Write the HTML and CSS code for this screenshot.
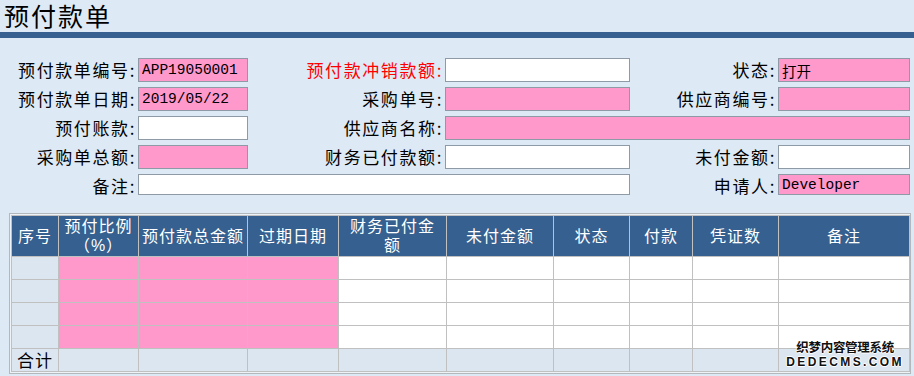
FILE: index.html
```html
<!DOCTYPE html>
<html lang="zh-CN">
<head>
    <meta charset="UTF-8">
    <title>预付款单</title>
    <link rel="stylesheet" href="styles.css">
</head>
<body>
    <header class="page-head">
        <h1>预付款单</h1>
    </header>

    <form class="bill-form">
        <label class="lbl">预付款单编号:</label>
        <input class="fld req" type="text" value="APP19050001">
        <label class="lbl red">预付款冲销款额:</label>
        <input class="fld" type="text">
        <label class="lbl">状态:</label>
        <input class="fld req" type="text" value="打开">

        <label class="lbl">预付款单日期:</label>
        <input class="fld req" type="text" value="2019/05/22">
        <label class="lbl">采购单号:</label>
        <input class="fld req" type="text">
        <label class="lbl">供应商编号:</label>
        <input class="fld req" type="text">

        <label class="lbl">预付账款:</label>
        <input class="fld" type="text">
        <label class="lbl">供应商名称:</label>
        <input class="fld req span-3" type="text">

        <label class="lbl">采购单总额:</label>
        <input class="fld req" type="text">
        <label class="lbl">财务已付款额:</label>
        <input class="fld" type="text">
        <label class="lbl">未付金额:</label>
        <input class="fld" type="text">

        <label class="lbl">备注:</label>
        <input class="fld short span-3" type="text">
        <label class="lbl">申请人:</label>
        <input class="fld req short" type="text" value="Developer">
    </form>

    <div class="grid-wrap">
        <table class="pay-grid">
            <colgroup>
                <col style="width:47px"><col style="width:80px"><col style="width:109px">
                <col style="width:91px"><col style="width:108px"><col style="width:107px">
                <col style="width:76px"><col style="width:63px"><col style="width:86px">
                <col style="width:131px">
            </colgroup>
            <thead>
                <tr>
                    <th>序号</th>
                    <th class="two">预付比例<br>（%）</th>
                    <th>预付款总金额</th>
                    <th>过期日期</th>
                    <th class="two">财务已付金<br>额</th>
                    <th>未付金额</th>
                    <th>状态</th>
                    <th>付款</th>
                    <th>凭证数</th>
                    <th>备注</th>
                </tr>
            </thead>
            <tbody id="grid-body"></tbody>
            <tfoot>
                <tr>
                    <td class="sum-label">合计</td>
                    <td></td><td></td><td></td><td></td><td></td><td></td><td></td><td></td><td></td>
                </tr>
            </tfoot>
        </table>
    </div>

    <div class="watermark">
        <div class="wm-cn">织梦内容管理系统</div>
        <div class="wm-en">DEDECMS.COM</div>
    </div>

    <script>
        const body = document.getElementById('grid-body');
        for (let i = 0; i < 4; i++) {
            const tr = document.createElement('tr');
            tr.innerHTML = '<td class="idx"></td>' +
                '<td class="req"></td><td class="req"></td><td class="req"></td>' +
                '<td></td><td></td><td></td><td></td><td></td><td></td>';
            body.appendChild(tr);
        }
    </script>
</body>
</html>
```

FILE: styles.css
```css
body {
    margin: 0;
    height: 376px;
    overflow: hidden;
    position: relative;
    background: #dde9f5;
    font-family: "Noto Sans CJK SC", sans-serif;
    color: #000;
}

.page-head {
    border-bottom: 6px solid #35608f;
    height: 32px;
}

.page-head h1 {
    margin: 0;
    padding: 2px 0 0 4px;
    font-family: "Liberation Sans", "Noto Sans CJK SC", sans-serif;
    font-size: 25px;
    font-weight: normal;
    line-height: 30px;
    letter-spacing: 2px;
}

.bill-form {
    display: grid;
    grid-template-columns: 138px 110px 197px 185px 148px 132px;
    grid-auto-rows: 24px;
    row-gap: 5px;
    margin-top: 20px;
}

.lbl {
    font-size: 17px;
    letter-spacing: 1.6px;
    line-height: 24px;
    text-align: right;
    padding-right: 2px;
    white-space: nowrap;
}

.lbl.red {
    color: #ff0000;
}

.fld {
    box-sizing: border-box;
    width: 100%;
    height: 24px;
    margin: 0;
    padding: 0 3px;
    border: 1px solid #8e9aa6;
    background: #fff;
    font-family: "Liberation Mono", "Noto Sans CJK SC", monospace;
    font-size: 14.5px;
    color: #000;
    outline: none;
}

.fld.req {
    background: #ff99cc;
}

.fld.short {
    height: 21px;
}

.span-3 {
    grid-column: span 3;
}

.grid-wrap {
    margin: 15px 0 0 9px;
    width: 898px;
    border: 1px solid #b3b8bd;
    padding: 1px;
    background: #eef3f8;
}

.pay-grid {
    width: 898px;
    table-layout: fixed;
    border-collapse: collapse;
}

.pay-grid th,
.pay-grid td {
    border: 1px solid #c0c0c0;
    padding: 0;
}

.pay-grid th {
    height: 39px;
    background: #35608f;
    color: #fff;
    font-family: "Liberation Sans", "Noto Sans CJK SC", sans-serif;
    font-size: 16px;
    font-weight: normal;
    letter-spacing: 1px;
    line-height: 19px;
    text-align: center;
    white-space: nowrap;
}

.pay-grid th.two {
    vertical-align: top;
    line-height: 19px;
    padding-top: 1px;
}

.pay-grid td {
    height: 22px;
    background: #fff;
}

.pay-grid td.idx {
    background: #dce6f0;
}

.pay-grid td.req {
    background: #ff99cc;
}

.pay-grid tfoot td {
    background: #dce6f0;
}

.pay-grid td.sum-label {
    font-size: 17px;
    letter-spacing: 1px;
    text-align: center;
    line-height: 20px;
}

.watermark {
    position: absolute;
    right: 10px;
    bottom: 7px;
    text-align: center;
    font-weight: bold;
    color: #111;
    text-shadow: -1px 0 #fff, 1px 0 #fff, 0 -1px #fff, 0 1px #fff;
}

.wm-cn {
    font-size: 12.5px;
    line-height: 16px;
    letter-spacing: -0.3px;
}

.wm-en {
    font-family: "Liberation Sans", sans-serif;
    font-size: 12px;
    line-height: 14px;
    letter-spacing: 2.4px;
}
```
